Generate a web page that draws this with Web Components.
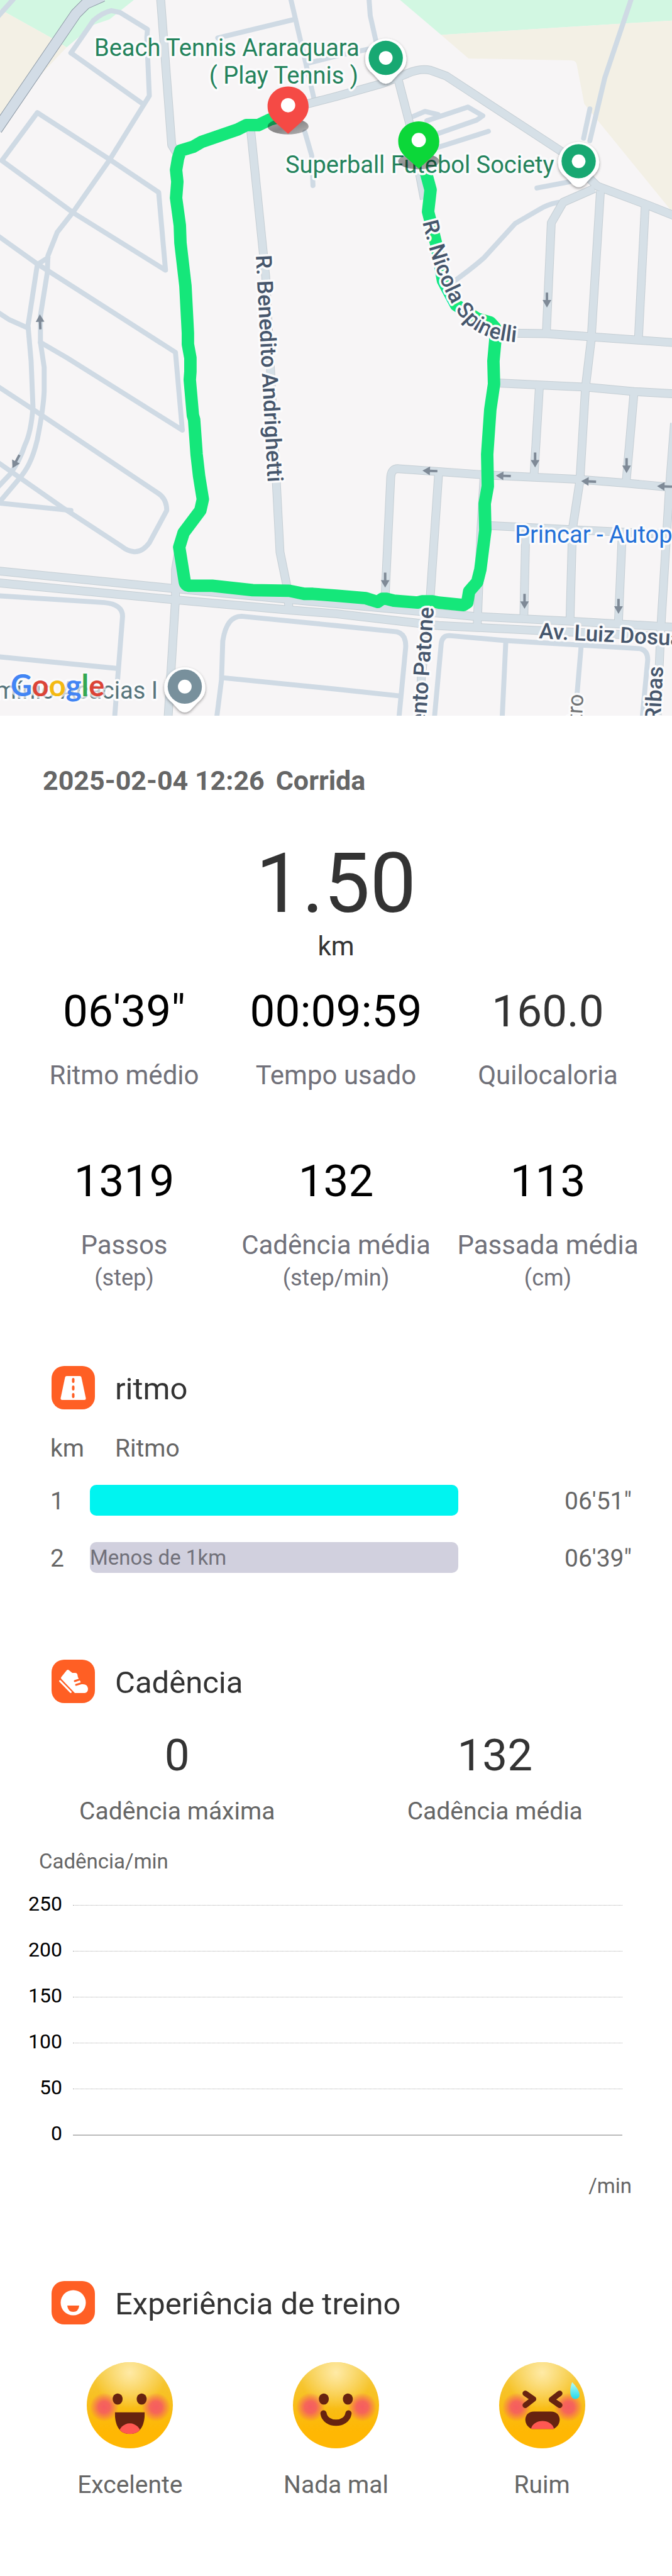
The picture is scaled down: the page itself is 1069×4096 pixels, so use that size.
<!DOCTYPE html>
<html lang="pt-BR">
<head>
<meta charset="utf-8">
<meta name="viewport" content="width=device-width, initial-scale=1">
<title>Corrida</title>
<style>
  body { margin: 0; background: #fff; font-family: Roboto, sans-serif; color: #333; }
</style>
</head>
<body>
<run-report></run-report>

<template id="t-map">
  <style>
    :host { display: block; background: #f7f5f6; }
    svg { display: block; width: 100%; height: auto; font-family: Roboto, sans-serif; }
    .thin { fill: none; stroke: #cfdae4; stroke-width: 8; stroke-linejoin: round; stroke-linecap: round; }
    .edge { fill: none; stroke: #c5ced4; stroke-width: 14; stroke-linejoin: round; }
    .main { fill: none; stroke: #d6e0e7; stroke-width: 12; stroke-linejoin: round; }
    text { paint-order: stroke; stroke: #fbfbfc; stroke-width: 7; stroke-linejoin: round; }
    .place { font-size: 38px; fill: #24835c; }
    .shop { font-size: 38px; fill: #2370d8; }
    .home { font-size: 38px; fill: #56747b; }
    .street { font-size: 35px; font-weight: 500; fill: #46566c; }
    .minor { font-size: 35px; fill: #707274; }
    .brand { font-family: Lato, sans-serif; font-size: 47px; font-weight: 700; stroke-opacity: .7; }
  </style>
  <svg viewBox="0 0 1069 1138" role="img" aria-label="Mapa do percurso">
    <defs>
      <linearGradient id="shade" x1="0" x2="1" y1="0" y2="1">
        <stop offset="0" stop-color="#000" stop-opacity=".3"/>
        <stop offset=".5" stop-color="#000" stop-opacity=".45"/>
        <stop offset="1" stop-color="#000" stop-opacity=".25"/>
      </linearGradient>
      <filter id="soft" x="-30%" y="-30%" width="160%" height="160%">
        <feDropShadow dx="0" dy="2" stdDeviation="2" flood-color="#000" flood-opacity=".4"/>
      </filter>
      <g id="poi">
        <path filter="url(#soft)" fill="#fff" d="M0-31C18-31 33-17 33 2C33 14 27 20 20 26L9 38Q0 45-9 38L-20 26C-27 20-33 14-33 2C-33-17-18-31 0-31Z"/>
        <circle r="27.500"/>
        <circle r="11" fill="#fff"/>
      </g>
      <g id="pin">
        <path d="M0-32C19-32 33-18 33 0C33 12 27 20 19 27L0 44L-19 27C-27 20-33 12-33 0C-33-18-19-32 0-32Z"/>
        <circle cy="-2" r="11.500" fill="#fff"/>
      </g>
      <path id="arrow" fill="#7f8a97" d="M-7-12H-2V-24H2V-12H7L0 0Z"/>
      <g id="mains">
        <path d="M258-4L276 233L284 246"/>
        <path d="M403 210L427 444L444 772L450 887L461 941L465 983"/>
        <path d="M463 175L540 155L615 134L655 118Q675 109 692 113L717 122L905 245L960 299L1040 329L1090 349"/>
        <path d="M640 128L660 205L682 320"/>
        <path d="M955 303L905 325L886 358L878 536"/>
        <path d="M965 307L950 547L941 622L932 772L920 850L916 1000"/>
        <path d="M1037 330L1026 546"/>
        <path d="M800 535L879 536L950 541L1090 551"/>
        <path d="M795 615L943 622L1019 629L1090 633"/>
        <path d="M867 620L858 768"/>
        <path d="M1019 630L1006 778"/>
        <path d="M1084 680L1076 783L1062 1010L1056 1155"/>
        <path d="M619 958L628 766Q629 752 641 753L781 763L929 770L1005 776L1090 784"/>
        <path d="M705 760L691 965L677 1090L677 1155"/>
        <path d="M778 765L773 850L767 1005"/>
        <path d="M780 844L922 851L1090 859"/>
        <path d="M845 850L842 988"/>
        <path d="M1000 858L994 998"/>
        <path d="M288 880L282 915L282 963L270 1155"/>
        <path d="M-5 917L275 945L465 963L760 990L919 998L1090 1008"/>
        <path d="M-5 936L275 963L465 980L540 986L705 1005L867 1013L1090 1024"/>
      </g>
      <path id="nicola" d="M672 353C680 384 686 412 697 436C714 480 728 500 744 516C766 534 786 546 870 546"/>
    </defs>

    <g transform="scale(.9898)">
      <path fill="#d2f7e2" d="M0 0H215L176 31L150 40L107 76L83 61L0 15Z"/>
      <path fill="#f3f0e5" d="M0 15L83 61L107 76L74 111L0 190Z"/>
      <path fill="#d2f7e2" d="M643 0L709 56L1080 33V0Z"/>
      <path fill="#f3f0e5" d="M709 56L1080 33V340L939 167L927 104Q926 97 918 97L753 94Z"/>

      <g class="thin">
        <path d="M22-2L-2 25"/>
        <path d="M114 85L150 33Q165 20 179 17L193 20L237 47L236 60L240 154L230 170L176 257L118 340L92 373L77 411L76 438L65 507L65 550L71 590L71 628Q70 655 60 706C52 740 42 756 30 770L-2 808"/>
        <path d="M114 85L231 168"/>
        <path d="M60 181L176 256L255 309L266 434L118 342L3 258Z"/>
        <path d="M77 414L60 425L45 523L50 580L53 654Q50 695 40 715Q32 740 16 762L-3 782"/>
        <path d="M-3 379L60 424L282 566L293 691L108 575L65 550"/>
        <path d="M-3 502L14 513L45 527"/>
        <path d="M-3 621L55 659L255 793Q268 802 268 820L240 872Q228 888 214 886Q205 885 196 878L100 815L-3 743"/>
        <path d="M-3 808L114 820"/>
        <path d="M467-3L483 65L505 160"/>
        <path d="M350 61L474 31"/>
        <path d="M497 101L540 90L592 79"/>
        <path d="M593-3L595 25L604 65"/>
        <path d="M490 212L501 250L503 298"/>
        <path d="M664 187L683 179L704 184M686 194L752 172L776 186L766 193L700 216M700 238L785 211"/>
        <path d="M863 302L915 292"/>
        <path d="M938 222L948 175M1015-3L972 125L948 226"/>
        <path d="M898 325Q880 328 864 338L828 359L778 414Q760 430 731 451"/>
        <path d="M-3 957L168 968Q197 971 197 990L184 1155"/>
        <path d="M-3 1055L190 1074"/>
        <path d="M348 1155L356 1092L358 1030Q364 990 388 990L540 1005L638 1015Q653 1019 652 1040L641 1155"/>
        <path d="M360 1089L540 1107L643 1118"/>
        <path d="M698 1155L709 1035Q710 1021 722 1021L812 1029L1029 1042Q1041 1045 1041 1060L1032 1155"/>
        <path d="M813 1029L807 1155M934 1038L924 1155"/>
      </g>
      <use href="#mains" class="edge"/>
      <use href="#mains" class="main"/>
      <g fill="none" stroke-linejoin="round">
        <path stroke="#8f9ba7" stroke-width="18" d="M165-6L138 6L122 22L-5 208"/>
        <path stroke="#d2dce6" stroke-width="16" d="M165-6L138 6L122 22L-5 208"/>
      </g>

      <use href="#arrow" transform="translate(64 505) rotate(178)"/>
      <use href="#arrow" transform="translate(20 752) rotate(28)"/>
      <use href="#arrow" transform="translate(879 494)"/>
      <use href="#arrow" transform="translate(860 751)"/>
      <use href="#arrow" transform="translate(1007 760)"/>
      <use href="#arrow" transform="translate(619 944)"/>
      <use href="#arrow" transform="translate(843 978)"/>
      <use href="#arrow" transform="translate(994 986)"/>
      <use href="#arrow" transform="translate(679 756) rotate(92)"/>
      <use href="#arrow" transform="translate(797 764) rotate(92)"/>
      <use href="#arrow" transform="translate(934 773) rotate(92)"/>
      <use href="#arrow" transform="translate(1056 781) rotate(92)"/>

      <path fill="none" stroke="#15e77a" stroke-width="20" stroke-linejoin="round" d="M463 184L434 192L415 201L396 201L382 208L324 228L310 236L290 242L286 255L283 273L285 292L283 318L289 362L290 390L298 459L302 535L302 553L306 575L306 597L305 610L310 667L312 674L316 730L320 765L326 802L322 820L295 856L288 879L297 935Q298 941 306 941L341 941L406 948L465 949L489 954L503 954L540 957L588 961L607 967L614 962L621 962L633 965L671 968L678 966L695 966L705 968L745 972L751 968L754 950L767 935L772 915L780 852L779 809L784 781L783 730L788 658L794 617L793 580L796 547L796 527L788 518L767 512L753 503L733 490L712 451L702 396L688 340L692 305L684 275"/>
    </g>

    <text class="place" x="150" y="89">Beach Tennis Araraquara</text>
    <text class="place" x="570" y="133" text-anchor="end">( Play Tennis )</text>
    <text class="place" x="454" y="275">Superball Futebol Society</text>
    <text class="shop" x="819" y="863">Princar - Autop</text>
    <text class="street" transform="translate(407 406) rotate(87)">R. Benedito Andrighetti</text>
    <text class="street"><textPath href="#nicola">R. Nicola Spinelli</textPath></text>
    <text class="street" transform="translate(857 1015) rotate(3)">Av. Luiz Dosua</text>
    <text class="street" transform="translate(690 966) rotate(-86)" text-anchor="end">ento Patone</text>
    <text class="minor" transform="translate(928 1104) rotate(-87)" text-anchor="end">tro</text>
    <text class="street" transform="translate(1055 1060) rotate(-87)" text-anchor="end">Ribas</text>
    <text class="home" x="251" y="1111" text-anchor="end">mínio Acacias I</text>

    <g transform="scale(.9898)">
      <use href="#poi" x="620" y="93" fill="#18a872"/>
      <use href="#poi" x="930" y="259" fill="#18a872"/>
      <use href="#poi" x="297" y="1103" fill="#78909c"/>
      <ellipse cx="463" cy="203" rx="33" ry="13" fill="url(#shade)"/>
      <use href="#pin" x="463" y="171" fill="#f54a45"/>
      <ellipse cx="673" cy="259" rx="33" ry="13" fill="url(#shade)"/>
      <use href="#pin" x="673" y="227" fill="#0cd739"/>
    </g>
    <text class="brand" x="17" y="1107" aria-label="Google"><tspan fill="#4285f4">G</tspan><tspan fill="#db4437">o</tspan><tspan fill="#f4b912">o</tspan><tspan fill="#4285f4">g</tspan><tspan fill="#34a853">l</tspan><tspan fill="#db4437">e</tspan></text>
  </svg>
</template>

<template id="t-stat">
  <style>
    :host { display: flex; flex: 1 1 0; flex-direction: column; align-items: center; text-align: center; color: #71717a; white-space: nowrap; }
    .value { font-size: 71px; line-height: 84px; color: var(--value-color, #000); }
    .label { font-size: 42px; line-height: 56px; margin-top: 32px; }
    .unit { font-size: 36px; line-height: 48px; }
    :host([compact]) { color: #666; }
    :host([compact]) .label { font-size: 39px; line-height: 52px; margin-top: 21px; }
  </style>
  <div class="value"><slot></slot></div>
  <div class="label"><slot name="label"></slot></div>
  <div class="unit"><slot name="unit"></slot></div>
</template>

<template id="t-heading">
  <style>
    :host { display: flex; align-items: center; gap: 32px; padding: 0 82px; }
    svg { width: 69px; height: 69px; flex: none; }
    h2 { margin: 0; padding-top: 4px; font-size: 49px; line-height: 64px; font-weight: 400; color: #333; }
  </style>
  <svg viewBox="0 0 69 69" aria-hidden="true"></svg>
  <h2><slot></slot></h2>
</template>

<template id="t-pace">
  <style>
    :host { display: block; padding: 0 64px 0 80px; color: #666; }
    table { width: 100%; border-collapse: collapse; table-layout: fixed; font-size: 39px; line-height: 52px; }
    th, td { padding: 0; font-weight: 400; text-align: left; }
    thead th { height: 63px; vertical-align: top; }
    thead th + th { padding-left: 40px; }
    tbody tr { height: 91px; }
    .km { width: 63px; }
    .time { width: 276px; text-align: right; }
    tbody th, .time { padding-top: 3px; }
    .bar { display: flex; align-items: center; height: 49px; border-radius: 10px; background: #00f4f0; color: #71717a; font-size: 33px; }
    .bar.partial { background: #d1d0de; }
  </style>
  <table>
    <colgroup><col class="km"><col><col class="time"></colgroup>
    <thead><tr><th scope="col">km</th><th scope="col" colspan="2">Ritmo</th></tr></thead>
    <tbody>
      <tr><th scope="row">1</th><td><div class="bar"></div></td><td class="time">06'51"</td></tr>
      <tr><th scope="row">2</th><td><div class="bar partial">Menos de 1km</div></td><td class="time">06'39"</td></tr>
    </tbody>
  </table>
</template>

<template id="t-chart">
  <style>
    :host { display: block; font-size: 33px; line-height: 44px; color: #666; }
    .title { padding-left: 62px; }
    ol { list-style: none; margin: 8px 0 26px; padding: 0 79px 0 0; color: #000; font-size: 32px; }
    li { display: flex; align-items: center; height: 73px; gap: 17px; }
    span { width: 99px; text-align: right; flex: none; }
    hr { flex: 1; margin: 6px 0 0; border: 0; border-top: 1px dotted #aaa; }
    li:last-child hr { border-top: 2px solid #bbb; }
    .unit { padding-right: 64px; text-align: right; }
  </style>
  <div class="title">Cadência/min</div>
  <ol></ol>
  <div class="unit">/min</div>
</template>

<template id="t-mood">
  <style>
    :host { display: flex; flex: 1 1 0; justify-content: center; }
    button { display: flex; flex-direction: column; align-items: center; gap: 32px; padding: 0; border: 0; background: none; font: inherit; font-size: 39px; line-height: 52px; color: #666; }
    svg { width: 137px; height: 137px; }
  </style>
  <button type="button">
    <svg viewBox="0 0 138 138" aria-hidden="true">
      <defs>
        <linearGradient id="skin" x1="0" x2="0" y1="0" y2="1">
          <stop offset="0" stop-color="#f3cc45"/><stop offset=".55" stop-color="#f9bc14"/><stop offset=".8" stop-color="#ffb703"/>
        </linearGradient>
        <radialGradient id="glow" cx=".5" cy=".12" r=".42">
          <stop offset="0" stop-color="#ffeaa6"/><stop offset="1" stop-color="#ffeaa6" stop-opacity="0"/>
        </radialGradient>
        <radialGradient id="blush">
          <stop offset="0" stop-color="#f55c60"/><stop offset=".4" stop-color="#f55c60" stop-opacity=".9"/><stop offset="1" stop-color="#f55c60" stop-opacity="0"/>
        </radialGradient>
        <linearGradient id="drop" x1="0" x2="0" y1="0" y2="1">
          <stop offset="0" stop-color="#b8fbf4"/><stop offset="1" stop-color="#22d9ec"/>
        </linearGradient>
        <clipPath id="face"><circle cx="69" cy="69" r="69"/></clipPath>
        <clipPath id="grin"><path d="M45 80H93C93 101 86 115 69 115S45 101 45 80Z"/></clipPath>
      </defs>
      <circle cx="69" cy="69" r="69" fill="url(#skin)"/>
      <circle cx="69" cy="69" r="69" fill="url(#glow)"/>
      <g clip-path="url(#face)" fill="url(#blush)"><circle cx="28" cy="72" r="23"/><circle cx="111" cy="72" r="23"/></g>
      <g class="features"></g>
    </svg>
    <span><slot></slot></span>
  </button>
</template>

<template id="t-report">
  <style>
    :host { display: block; padding-bottom: 117px; }
    h1 { display: flex; gap: 18px; margin: 75px 68px 0; font-size: 43px; line-height: 56px; font-weight: 700; color: #666; }
    .distance { margin-top: 66px; text-align: center; font-size: 131px; line-height: 140px; color: #333; }
    .distance small { display: block; padding-top: 2px; font-size: 42px; line-height: 56px; }
    .stats { display: flex; padding: 0 29px; }
    .first { margin-top: 33px; }
    .second { margin-top: 98px; }
    .dark { --value-color: #333; }
    section-heading { margin-top: 117px; }
    .pace { margin-top: 116px; }
    pace-table { margin-top: 36px; }
    .cadence { margin-top: 41px; }
    cadence-chart { margin-top: 32px; }
    .moods { display: flex; padding: 0 43px; margin-top: 60px; }
    .last { margin-top: 129px; }
  </style>
  <route-map></route-map>
  <h1><span>2025-02-04 12:26</span><span>Corrida</span></h1>
  <div class="distance">1.50<small>km</small></div>
  <div class="stats first">
    <stat-item>06'39"<span slot="label">Ritmo médio</span></stat-item>
    <stat-item>00:09:59<span slot="label">Tempo usado</span></stat-item>
    <stat-item class="dark">160.0<span slot="label">Quilocaloria</span></stat-item>
  </div>
  <div class="stats second">
    <stat-item>1319<span slot="label">Passos</span><span slot="unit">(step)</span></stat-item>
    <stat-item>132<span slot="label">Cadência média</span><span slot="unit">(step/min)</span></stat-item>
    <stat-item>113<span slot="label">Passada média</span><span slot="unit">(cm)</span></stat-item>
  </div>
  <section-heading class="pace" icon="road">ritmo</section-heading>
  <pace-table></pace-table>
  <section-heading icon="shoe">Cadência</section-heading>
  <div class="stats cadence">
    <stat-item compact class="dark">0<span slot="label">Cadência máxima</span></stat-item>
    <stat-item compact class="dark">132<span slot="label">Cadência média</span></stat-item>
  </div>
  <cadence-chart></cadence-chart>
  <section-heading class="last" icon="smile">Experiência de treino</section-heading>
  <div class="moods">
    <mood-button mood="great">Excelente</mood-button>
    <mood-button mood="good">Nada mal</mood-button>
    <mood-button mood="bad">Ruim</mood-button>
  </div>
</template>

<script>
  class Part extends HTMLElement {
    constructor() {
      super();
      const template = document.getElementById(this.constructor.template);
      this.attachShadow({ mode: 'open' }).append(template.content.cloneNode(true));
    }
  }

  class RouteMap extends Part { static template = 't-map'; }

  class StatItem extends Part {
    static template = 't-stat';
    connectedCallback() {
      if (!this.querySelector('[slot=unit]')) this.shadowRoot.querySelector('.unit').hidden = true;
    }
  }

  const ICONS = {
    road: '<path fill="#fff" d="M24 16H45Q47 16 47.500 18L54.500 51Q55 54 52 54H17Q14 54 14.500 51L21.500 18Q22 16 24 16Z"/><path stroke="#ff5f24" stroke-width="4" stroke-linecap="round" d="M34.500 21V25M34.500 33V37M34.500 45V49"/>',
    shoe: '<path fill="#fff" d="M24 17Q26 15 28 17L33 21H38Q40 21 41 23L42 28L45 33L48 39Q57 38 58 46Q58 52 53 53H37L16 31Q14 29 16 27Z"/><path fill="none" stroke="#fff" stroke-width="3" stroke-linecap="round" d="M13.500 34L30.500 51.500"/><path fill="none" stroke="#ff5f24" stroke-width="3" stroke-linecap="round" d="M37 34L46 31M39 40L49 37"/>',
    smile: '<circle cx="34.500" cy="34.500" r="20" fill="#fff"/><path fill="#ff5f24" d="M25 39H44Q43 49 34.500 49Q26 49 25 39Z"/>'
  };

  class SectionHeading extends Part {
    static template = 't-heading';
    connectedCallback() {
      this.shadowRoot.querySelector('svg').innerHTML =
        '<rect width="69" height="69" rx="20" fill="#ff5f24"/>' + ICONS[this.getAttribute('icon')];
    }
  }

  class PaceTable extends Part { static template = 't-pace'; }

  class CadenceChart extends Part {
    static template = 't-chart';
    connectedCallback() {
      this.shadowRoot.querySelector('ol').innerHTML =
        [250, 200, 150, 100, 50, 0].map(n => `<li><span>${n}</span><hr></li>`).join('');
    }
  }

  const EYES = '<ellipse cx="49.500" cy="59" rx="8" ry="9" fill="#672310"/><ellipse cx="88" cy="59" rx="8" ry="9" fill="#672310"/>';
  const MOODS = {
    great: EYES + '<g clip-path="url(#grin)"><rect x="40" y="78" width="60" height="40" fill="#672310"/><circle cx="69" cy="116" r="18" fill="#ff5852"/></g>',
    good: EYES + '<path fill="none" stroke="#672310" stroke-width="10" stroke-linecap="round" d="M49 82C52 102 86 102 89 82"/>',
    bad: '<path fill="none" stroke="#672310" stroke-width="9" stroke-linecap="round" stroke-linejoin="round" d="M42 50L55 59L42 69M97 50L84 60L97 69"/>' +
      '<path fill="#672310" d="M56 79H83C92 79 97 85 97 92C97 99 93 104 87 107H52C46 104 42 99 42 92C42 85 47 79 56 79Z"/>' +
      '<path fill="#ff5852" d="M51 107C55 90 84 90 88 107Z"/>' +
      '<path fill="url(#drop)" d="M117 32C112 44 113 59 122 59C134 58 129 44 117 32Z"/>'
  };

  class MoodButton extends Part {
    static template = 't-mood';
    connectedCallback() {
      this.shadowRoot.querySelector('.features').innerHTML = MOODS[this.getAttribute('mood')];
    }
  }

  class RunReport extends Part { static template = 't-report'; }

  customElements.define('route-map', RouteMap);
  customElements.define('stat-item', StatItem);
  customElements.define('section-heading', SectionHeading);
  customElements.define('pace-table', PaceTable);
  customElements.define('cadence-chart', CadenceChart);
  customElements.define('mood-button', MoodButton);
  customElements.define('run-report', RunReport);
</script>
</body>
</html>
